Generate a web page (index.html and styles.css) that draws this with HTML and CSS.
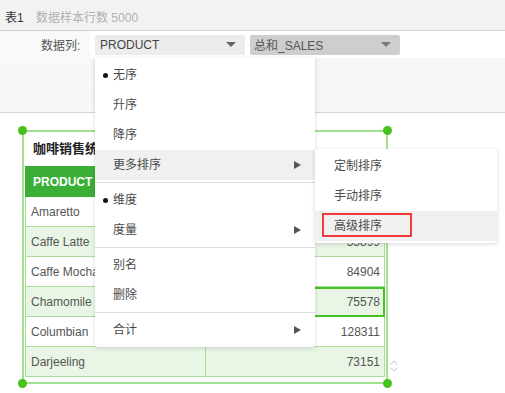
FILE: index.html
```html
<!DOCTYPE html>
<html>

<head>
    <title>排序</title>
    <link rel="stylesheet" href="styles.css">
</head>

<body>
    <div class="top-bar">
        <span class="sheet-name">表1</span>
        <span class="sheet-info">数据样本行数 5000</span>
    </div>

    <div class="panel">
        <div class="field-row">
            <span class="field-label">数据列:</span>
            <div class="select-box">
                <span>PRODUCT</span>
                <i class="caret"></i>
            </div>
            <div class="select-box active">
                <span>总和_SALES</span>
                <i class="caret"></i>
            </div>
        </div>
        <div class="strip"></div>
        <div class="strip"></div>
    </div>

    <div class="canvas">
        <div class="card">
            <div class="card-title">咖啡销售统计</div>
            <table class="data-table">
                <tr>
                    <th>PRODUCT</th>
                    <th class="num">总和_SALES</th>
                </tr>
                <tr>
                    <td>Amaretto</td>
                    <td class="num">26269</td>
                </tr>
                <tr class="alt">
                    <td>Caffe Latte</td>
                    <td class="num">35899</td>
                </tr>
                <tr>
                    <td>Caffe Mocha</td>
                    <td class="num">84904</td>
                </tr>
                <tr class="alt">
                    <td>Chamomile</td>
                    <td class="num picked">75578</td>
                </tr>
                <tr>
                    <td>Columbian</td>
                    <td class="num">128311</td>
                </tr>
                <tr class="alt">
                    <td>Darjeeling</td>
                    <td class="num">73151</td>
                </tr>
            </table>
            <span class="handle tl"></span>
            <span class="handle tr"></span>
            <span class="handle bl"></span>
            <span class="handle br"></span>
            <div class="scroll-arrows">
                <svg width="10" height="14" viewBox="0 0 10 14">
                    <path d="M1.5 5.5 L5 2 L8.5 5.5 M1.5 8.5 L5 12 L8.5 8.5" fill="none" stroke="#c4c4c4" stroke-width="1"/>
                </svg>
            </div>
        </div>
    </div>

    <div class="menu">
        <div class="menu-item checked">无序</div>
        <div class="menu-item">升序</div>
        <div class="menu-item">降序</div>
        <div class="menu-item hover has-sub">更多排序</div>
        <div class="menu-divider"></div>
        <div class="menu-item checked">维度</div>
        <div class="menu-item has-sub">度量</div>
        <div class="menu-divider"></div>
        <div class="menu-item">别名</div>
        <div class="menu-item">删除</div>
        <div class="menu-divider"></div>
        <div class="menu-item has-sub">合计</div>
    </div>

    <div class="menu sub-menu">
        <div class="menu-item">定制排序</div>
        <div class="menu-item">手动排序</div>
        <div class="menu-item hover">
            高级排序
            <span class="mark"></span>
        </div>
    </div>
</body>

</html>
```

FILE: styles.css
```css
body {
    margin: 0;
    font-family: "Liberation Sans", "Noto Sans CJK SC", Arial, sans-serif;
    font-size: 12px;
    color: #333;
    background-color: #fff;
    position: relative;
    width: 505px;
    height: 393px;
    overflow: hidden;
}

/* top bar */
.top-bar {
    box-sizing: border-box;
    height: 31px;
    padding: 10px 0 0 5px;
    background-color: #f2f2f2;
    border-bottom: 1px solid #d2d2d2;
    line-height: 16px;
}

.sheet-name {
    color: #333;
}

.sheet-info {
    color: #b0b0b0;
    margin-left: 9px;
}

/* data column panel */
.panel {
    height: 81px;
    background-color: #f8f8f8;
    border-bottom: 1px solid #d6d6d6;
}

.field-row {
    height: 27px;
    display: flex;
    align-items: center;
    padding-left: 41px;
    background: linear-gradient(to right, #f9f9f9 90px, #fff 90px);
}

.field-label {
    width: 54px;
    color: #555;
}

.select-box {
    width: 150px;
    height: 20px;
    box-sizing: border-box;
    margin-right: 5px;
    padding: 0 9px 0 5px;
    border-radius: 2px;
    background-color: #ececec;
    display: flex;
    align-items: center;
    justify-content: space-between;
    color: #444;
}

.select-box.active {
    background-color: #cecece;
    padding-left: 4px;
    color: #555;
}

.caret {
    width: 0;
    height: 0;
    border-left: 5px solid transparent;
    border-right: 5px solid transparent;
    border-top: 5px solid #666;
}

.select-box.active .caret {
    border-top-color: #7a7a7a;
}

.strip {
    height: 26px;
    margin-left: 90px;
    background-color: #f6f6f6;
}

.strip + .strip {
    margin-top: 2px;
    height: 24px;
}

/* report card */
.canvas {
    padding: 17px 0 0 22px;
}

.card {
    position: relative;
    width: 366px;
    box-sizing: border-box;
    border: 2px solid #a3e18f;
    padding: 0 1px 5px 1px;
}

.card-title {
    height: 34px;
    line-height: 34px;
    padding-left: 8px;
    font-size: 13px;
    font-weight: bold;
    color: #222;
}

.data-table {
    width: 360px;
    border-collapse: collapse;
    table-layout: fixed;
}

.data-table th,
.data-table td {
    height: 30px;
    box-sizing: border-box;
    padding: 0 5px;
    border: 1px solid #aadd9d;
    text-align: left;
    color: #555;
}

.data-table th {
    background-color: #3bae38;
    color: #fff;
    padding-left: 7px;
    border-color: #3bae38;
}

.data-table th:first-child,
.data-table td:first-child {
    width: 180px;
}

.data-table .num {
    text-align: right;
    padding-right: 4px;
}

.data-table tr.alt td {
    background-color: #e9f6e6;
}

.data-table td.picked {
    outline: 2px solid #46c224;
    outline-offset: -2px;
}

.handle {
    position: absolute;
    width: 9px;
    height: 9px;
    border-radius: 50%;
    background-color: #46c21c;
}

.handle.tl { left: -6px; top: -6px; }
.handle.tr { right: -6px; top: -6px; }
.handle.bl { left: -6px; bottom: -6px; }
.handle.br { right: -6px; bottom: -6px; }

.scroll-arrows {
    position: absolute;
    right: -13px;
    bottom: 9px;
    line-height: 0;
}

/* context menu */
.menu {
    position: absolute;
    left: 95px;
    top: 58px;
    width: 220px;
    padding: 2px 0;
    background-color: #fff;
    box-shadow: 0 1px 4px rgba(0, 0, 0, 0.16);
    border-radius: 2px;
}

.menu-item {
    position: relative;
    height: 30px;
    line-height: 30px;
    padding-left: 18px;
    color: #4a4a4a;
}

.menu-item.hover {
    background-color: #f0f0f0;
}

.menu-item.checked::before {
    content: "";
    position: absolute;
    left: 8px;
    top: 13px;
    width: 5px;
    height: 5px;
    border-radius: 50%;
    background-color: #111;
}

.menu-item.has-sub::after {
    content: "";
    position: absolute;
    right: 14px;
    top: 11px;
    border-top: 4px solid transparent;
    border-bottom: 4px solid transparent;
    border-left: 7px solid #555;
}

.menu-divider {
    height: 1px;
    margin: 2px 0;
    background-color: #dcdcdc;
}

.sub-menu {
    left: 315px;
    top: 149px;
    width: 182px;
}

.sub-menu .menu-item {
    padding-left: 19px;
}

.mark {
    position: absolute;
    left: 7px;
    top: 2px;
    width: 90px;
    height: 24px;
    box-sizing: border-box;
    border: 2px solid #f33a3a;
}
```
